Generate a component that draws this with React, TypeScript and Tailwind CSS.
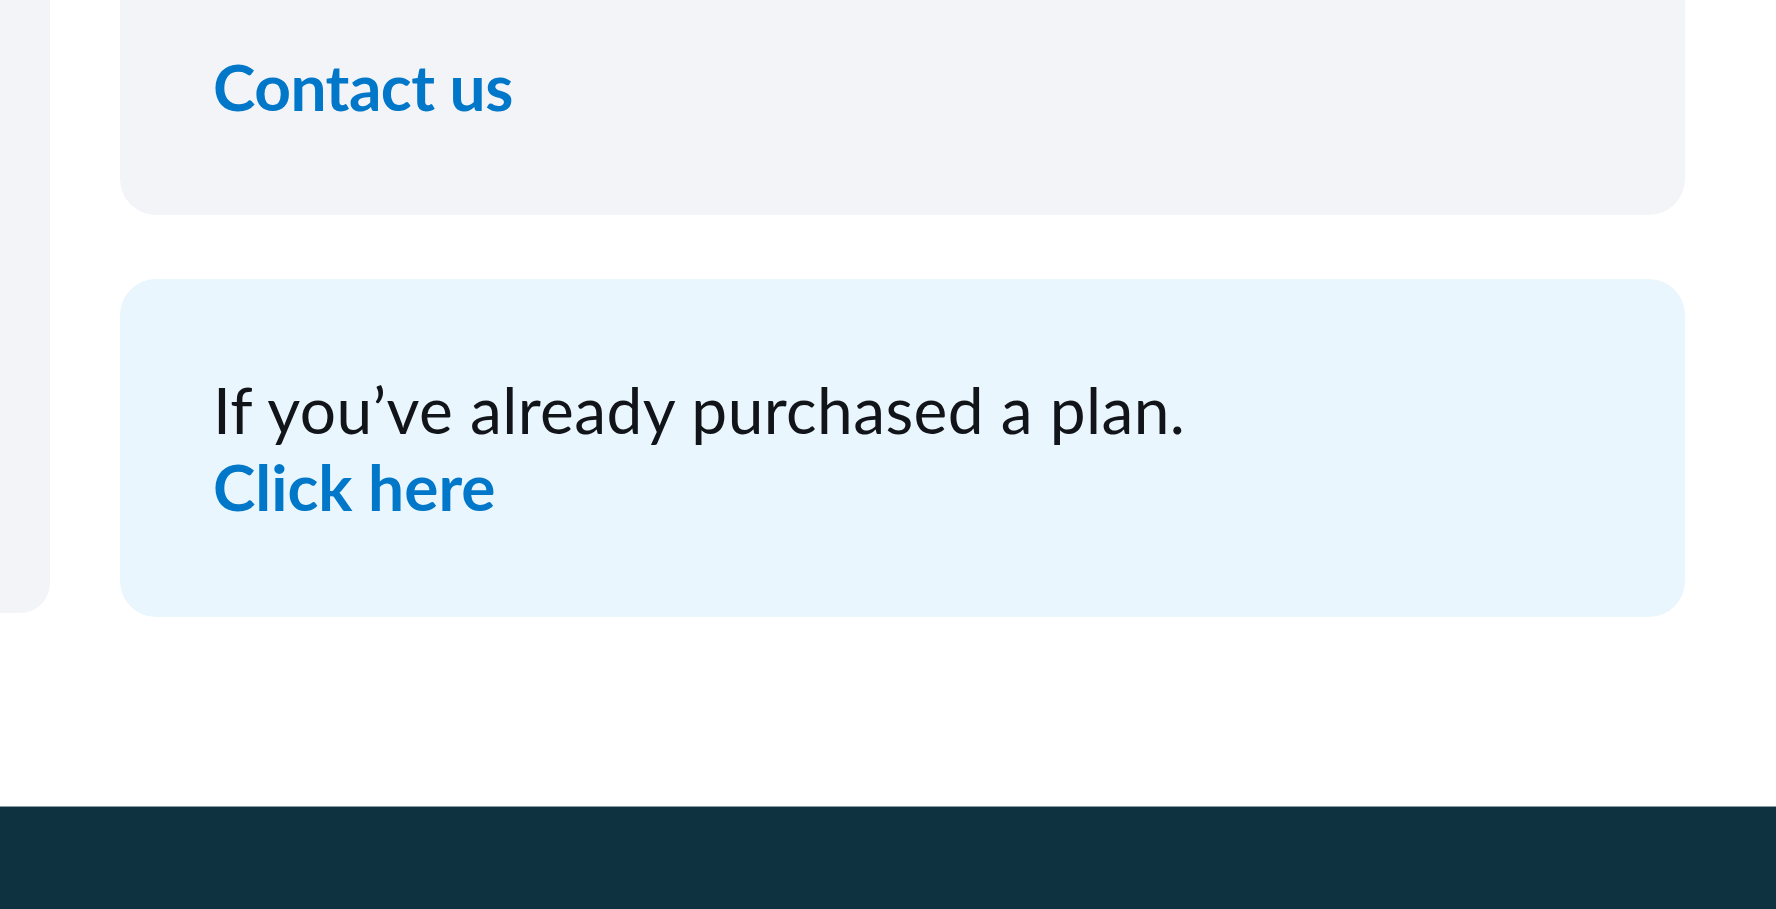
export default function App() {
  return (
    <div className="flex min-h-[909px] w-full flex-col bg-white font-['Lato','Liberation_Sans',sans-serif]">
      <div className="flex flex-1">
        {/* left rail panel */}
        <div className="h-[613px] w-[50px] shrink-0 rounded-br-[30px] bg-[#f3f4f8]" />

        <div className="ml-[70px] flex w-[1565px] flex-col gap-16">
          {/* contact card, scrolled partly out of view */}
          <div className="h-[215px] rounded-b-[36px] bg-[#f3f4f8] pl-[93px] pr-24 pt-[48px]">
            <a href="#" className="text-[64px] leading-[77px] font-bold tracking-[-0.5px] text-[#0077c8]">
              Contact us
            </a>
          </div>

          <div className="flex h-[338px] flex-col justify-center rounded-[36px] bg-[#eaf6fd] pl-[93px] pr-24">
            <p className="text-[64px] leading-[77px] tracking-[0.4px] text-[#111418]">
              If you’ve already purchased a plan.
            </p>
            <a href="#" className="text-[64px] leading-[77px] font-bold text-[#0077c8]">
              Click here
            </a>
          </div>
        </div>
      </div>

      <footer className="h-[103px] border-t border-[#8d9aa1] bg-[#0e3240]" />
    </div>
  )
}
